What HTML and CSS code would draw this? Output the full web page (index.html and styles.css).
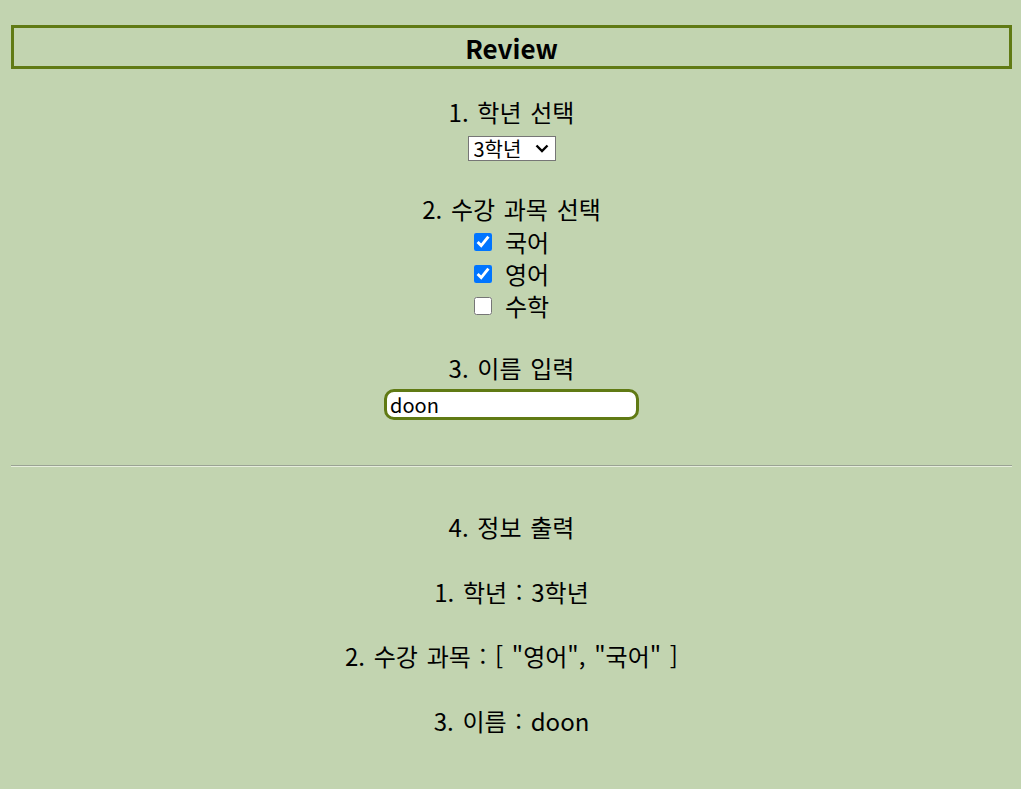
FILE: index.html
```html
<!DOCTYPE html>
<html lang="ko">
<head>
<meta charset="utf-8">
<title>Review</title>
<link rel="stylesheet" href="styles.css">
</head>
<body>
<div class="app">
  <h1 class="title">Review</h1>

  <div class="block block-grade">
    <div class="label">1. 학년 선택</div>
    <select class="grade-select">
      <option>1학년</option>
      <option>2학년</option>
      <option selected>3학년</option>
    </select>
  </div>

  <div class="block block-subject">
    <div class="label">2. 수강 과목 선택</div>
    <label class="check-row"><input type="checkbox" checked><span>국어</span></label>
    <label class="check-row"><input type="checkbox" checked><span>영어</span></label>
    <label class="check-row"><input type="checkbox"><span>수학</span></label>
  </div>

  <div class="block block-name">
    <div class="label">3. 이름 입력</div>
    <input class="name-input" type="text" value="doon">
  </div>

  <hr class="divider">

  <div class="output">
    <div class="label">4. 정보 출력</div>
    <div class="label">1. 학년 : 3학년</div>
    <div class="label">2. 수강 과목 : [ "영어", "국어" ]</div>
    <div class="label">3. 이름 : doon</div>
  </div>
</div>
</body>
</html>
```
FILE: styles.css
```css
html, body {
  margin: 0;
  padding: 0;
  background: #c2d4b0;
}
body {
  font-family: "Noto Sans CJK KR", "Noto Sans", sans-serif;
  color: #000;
}
.app {
  padding: 25px 9px 0 11px;
  display: flex;
  flex-direction: column;
  align-items: stretch;
}
.title {
  margin: 0;
  border: 3px solid #607a14;
  height: 38px;
  line-height: 39px;
  font-size: 26px;
  font-weight: 700;
  text-align: center;
}
.block {
  display: flex;
  flex-direction: column;
  align-items: center;
}
.label {
  font-size: 24px;
  line-height: 30px;
  height: 32px;
  word-spacing: 2px;
  text-align: center;
  white-space: nowrap;
}
.block-grade { margin-top: 28px; }
.grade-select {
  -webkit-appearance: none;
  appearance: none;
  margin-top: 7px;
  width: 88px;
  height: 25px;
  font-family: "Noto Sans CJK KR", sans-serif;
  font-size: 20px;
  line-height: 22px;
  border: 1px solid #767676;
  border-radius: 0;
  background-color: #fff;
  background-image: url("data:image/svg+xml;utf8,<svg xmlns='http://www.w3.org/2000/svg' width='14' height='9' viewBox='0 0 14 9'><path d='M1.5 1.5 L7 7 L12.5 1.5' fill='none' stroke='%23000' stroke-width='2.4'/></svg>");
  background-repeat: no-repeat;
  background-position: right 6px center;
  background-size: 14px 9px;
  color: #000;
  padding: 0 0 0 5px;
}
.block-subject { margin-top: 33px; }
.check-row {
  display: flex;
  align-items: center;
  height: 32px;
  font-size: 24px;
  line-height: 30px;
  gap: 13px;
}
.check-row input {
  margin: 0;
  width: 18px;
  height: 18px;
}
.block-name { margin-top: 31px; }
.name-input {
  margin-top: 4px;
  box-sizing: border-box;
  width: 255px;
  height: 31px;
  border: 3px solid #607a14;
  border-radius: 10px;
  background: #fff;
  font-family: "Noto Sans CJK KR", sans-serif;
  font-size: 20px;
  padding: 0 3px;
  color: #000;
  outline: none;
}
.divider {
  margin: 45px 0 0 0;
  border: 0;
  border-top: 1px solid #9aa394;
  border-bottom: 1px solid #e6eedc;
  height: 0;
}
.output {
  margin-top: 45px;
  display: flex;
  flex-direction: column;
  align-items: center;
  gap: 32.5px;
}
```
